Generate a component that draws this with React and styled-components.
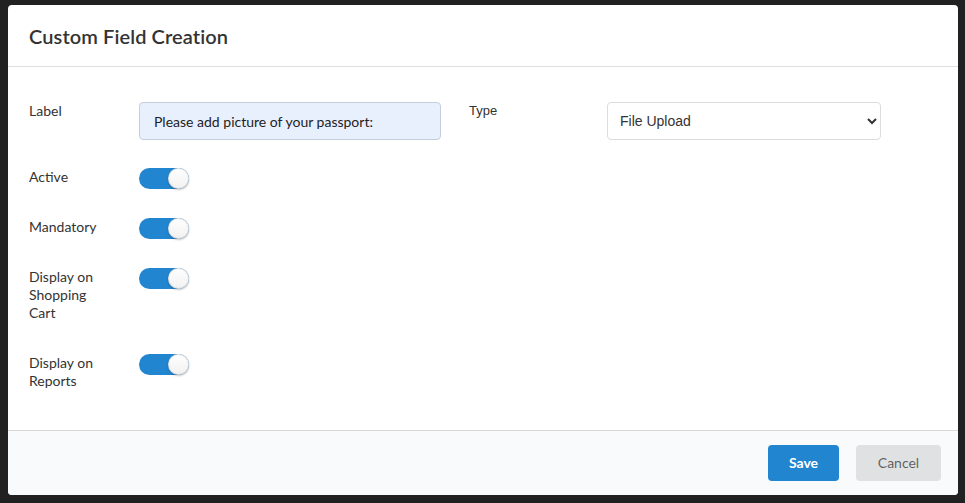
import styled, { createGlobalStyle } from 'styled-components';

const GlobalStyle = createGlobalStyle`
  html, body {
    margin: 0;
    padding: 0;
    background: #212121;
  }
  body {
    font-family: Lato, 'Noto Sans', sans-serif;
    color: #333;
  }
`;

const fields = [
  { label: 'Active' },
  { label: 'Mandatory' },
  { label: 'Display on Shopping Cart' },
  { label: 'Display on Reports' },
];

const App = () => {
  return (
    <>
      <GlobalStyle />
      <Backdrop>
        <Modal>
          <Header>
            <Title>Custom Field Creation</Title>
          </Header>
          <Content>
            <TopRow>
              <FieldLabel>Label</FieldLabel>
              <TextInput defaultValue="Please add picture of your passport:" />
              <TypeLabel>Type</TypeLabel>
              <Select defaultValue="file">
                <option value="text">Text</option>
                <option value="file">File Upload</option>
              </Select>
            </TopRow>
            {fields.map((f) => (
              <Row key={f.label}>
                <FieldLabel>{f.label}</FieldLabel>
                <Toggle $on />
              </Row>
            ))}
          </Content>
          <Footer>
            <Button $primary>Save</Button>
            <Button>Cancel</Button>
          </Footer>
        </Modal>
      </Backdrop>
    </>
  );
};

export default App;

const Backdrop = styled.div`
  height: 503px;
  padding: 5px 7px 0 8px;
  box-sizing: border-box;
`;

const Modal = styled.div`
  width: 950px;
  height: 490px;
  background: #fff;
  border-radius: 4px;
  display: flex;
  flex-direction: column;
  overflow: hidden;
`;

const Header = styled.div`
  height: 62px;
  box-sizing: border-box;
  border-bottom: 1px solid #dedede;
  display: flex;
  align-items: center;
  padding: 0 21px;
`;

const Title = styled.h1`
  margin: 0;
  font-size: 20px;
  font-weight: 600;
  color: #333;
  letter-spacing: 0.1px;
`;

const Content = styled.div`
  flex: 1;
  padding: 35px 21px 0;
  display: flex;
  flex-direction: column;
  gap: 28px;
`;

const TopRow = styled.div`
  display: grid;
  grid-template-columns: 110px 302px 28px 138px 274px;
  align-items: start;

  & > :nth-child(3) {
    grid-column: 4;
  }
`;

const Row = styled.div`
  display: flex;
  align-items: flex-start;
`;

const FieldLabel = styled.div`
  width: 78px;
  margin-right: 32px;
  padding-bottom: 4px;
  font-size: 14px;
  line-height: 18px;
  color: #333;
`;

const TypeLabel = styled.div`
  font-family: 'Liberation Sans', Arial, sans-serif;
  font-size: 13px;
  line-height: 18px;
  color: #333;
`;

const TextInput = styled.input`
  height: 38px;
  box-sizing: border-box;
  width: 302px;
  border: 1px solid #c5cedb;
  border-radius: 4px;
  background: #e8f0fe;
  padding: 0 14px;
  font-family: Lato, 'Noto Sans', sans-serif;
  font-size: 14px;
  color: #222;
  outline: none;
`;

const Select = styled.select`
  grid-column: 5;
  height: 38px;
  width: 274px;
  box-sizing: border-box;
  border: 1px solid #dcdcdc;
  border-radius: 4px;
  background: #fff;
  padding: 0 8px;
  font-family: 'Liberation Sans', Arial, sans-serif;
  font-size: 14px;
  color: #333;
  outline: none;
`;

const Toggle = styled.div`
  position: relative;
  width: 50px;
  height: 21px;
  border-radius: 11px;
  background: ${(p) => (p.$on ? '#2185d0' : '#ccc')};

  &::after {
    content: '';
    position: absolute;
    top: 0;
    ${(p) => (p.$on ? 'right: 0;' : 'left: 0;')}
    width: 21px;
    height: 21px;
    border-radius: 50%;
    background: linear-gradient(#fff, #f1f1f1);
    box-shadow: 0 1px 2px rgba(0, 0, 0, 0.25), 0 0 0 1px rgba(34, 36, 38, 0.12) inset;
  }
`;

const Footer = styled.div`
  height: 65px;
  box-sizing: border-box;
  border-top: 1px solid #d8d8d8;
  background: #f9fafb;
  display: flex;
  justify-content: flex-end;
  align-items: center;
  gap: 17px;
  padding: 0 17px 1px 0;
`;

const Button = styled.button`
  height: 36px;
  min-width: ${(p) => (p.$primary ? '71px' : '85px')};
  border: none;
  border-radius: 4px;
  background: ${(p) => (p.$primary ? '#2185d0' : '#e0e1e2')};
  color: ${(p) => (p.$primary ? '#fff' : 'rgba(0,0,0,0.6)')};
  font-family: Lato, 'Noto Sans', sans-serif;
  font-size: 14px;
  font-weight: ${(p) => (p.$primary ? 700 : 400)};
  padding: 0 16px;
  cursor: pointer;
`;
